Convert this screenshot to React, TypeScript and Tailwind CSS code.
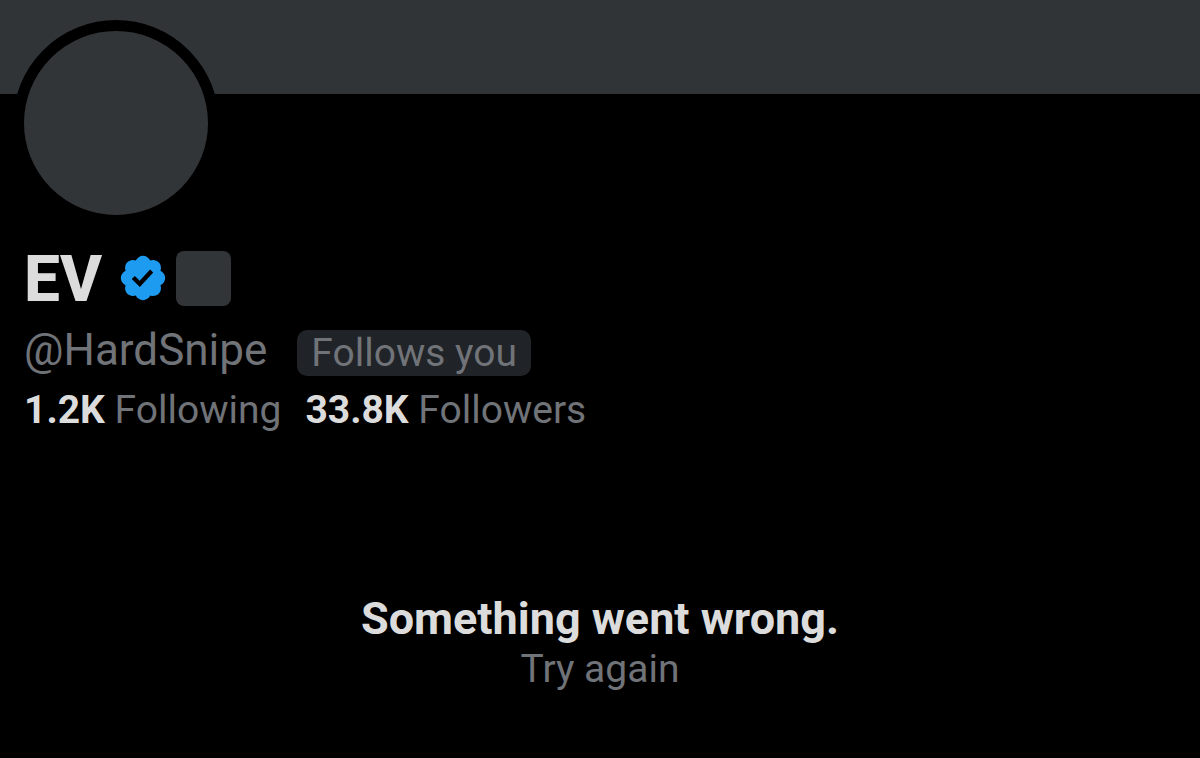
const VerifiedBadge = () => (
  <svg viewBox="0 0 22 22" role="img" aria-label="Verified account" className="h-[52px] w-[52px] fill-[#1d9bf0]">
    <path d="M20.396 11c-.018-.646-.215-1.275-.57-1.816-.354-.54-.852-.972-1.438-1.246.223-.607.27-1.264.14-1.897-.131-.634-.437-1.218-.882-1.687-.47-.445-1.053-.75-1.687-.882-.633-.13-1.29-.083-1.897.14-.273-.587-.704-1.086-1.245-1.44S11.647 1.62 11 1.604c-.646.017-1.273.213-1.813.568s-.969.854-1.24 1.44c-.608-.223-1.267-.272-1.902-.14-.635.13-1.22.436-1.69.882-.445.47-.749 1.055-.878 1.688-.13.633-.08 1.29.144 1.896-.587.274-1.087.705-1.443 1.245-.356.54-.555 1.17-.574 1.817.02.647.218 1.276.574 1.817.356.54.856.972 1.443 1.245-.224.606-.274 1.263-.144 1.896.13.634.433 1.218.877 1.688.47.443 1.054.747 1.687.878.633.132 1.29.084 1.897-.136.274.586.705 1.084 1.246 1.439.54.354 1.17.551 1.816.569.647-.016 1.276-.213 1.817-.567s.972-.854 1.245-1.44c.604.239 1.266.296 1.903.164.636-.132 1.22-.447 1.68-.907.46-.46.776-1.044.908-1.681s.075-1.299-.165-1.903c.586-.274 1.084-.705 1.439-1.246.354-.54.551-1.17.569-1.816zM9.662 14.85l-3.429-3.428 1.293-1.302 2.072 2.072 4.4-4.794 1.347 1.246z" />
  </svg>
);

const stats = [
  { label: "Following", value: "1.2K" },
  { label: "Followers", value: "33.8K" },
];

export default function App() {
  return (
    <main className="min-h-screen bg-black font-['Roboto',sans-serif] text-[#707378]">
      {/* Banner */}
      <div className="h-[94px] bg-[#313437]" />

      {/* Profile */}
      <header className="px-6">
        <div className="-mx-[11px] -mt-[74px] h-[206px] w-[206px] rounded-full border-[11px] border-black bg-[#323538]" />

        <div className="mt-[22px] flex items-center">
          <h1 className="pt-1 text-[64px] leading-[56px] font-extrabold text-[#dcdcdc]">EV</h1>
          <div className="ml-[15px] flex items-center gap-[7px]">
            <VerifiedBadge />
            <div className="h-[55px] w-[55px] rounded-lg bg-[#323538]" />
          </div>
        </div>

        <div className="mt-[22px] flex items-start gap-[30px]">
          <span className="text-[44px] leading-[40px]">@HardSnipe</span>
          <span className="rounded-[10px] bg-[#202327] px-[14px] text-[39px] leading-[46px]">Follows you</span>
        </div>

        <div className="mt-3 flex gap-6">
          {stats.map((stat) => (
            <a key={stat.label} href="#" className="text-[39px] leading-[44px]">
              <span className="font-bold text-[#dcdcdc]">{stat.value}</span> {stat.label}
            </a>
          ))}
        </div>
      </header>

      {/* Error state */}
      <section className="mt-40 flex flex-col items-center pb-16">
        <h2 className="text-[45px] leading-[54px] font-bold text-[#dcdcdc]">Something went wrong.</h2>
        <button className="text-[39px] leading-[46px]">Try again</button>
      </section>
    </main>
  );
}
